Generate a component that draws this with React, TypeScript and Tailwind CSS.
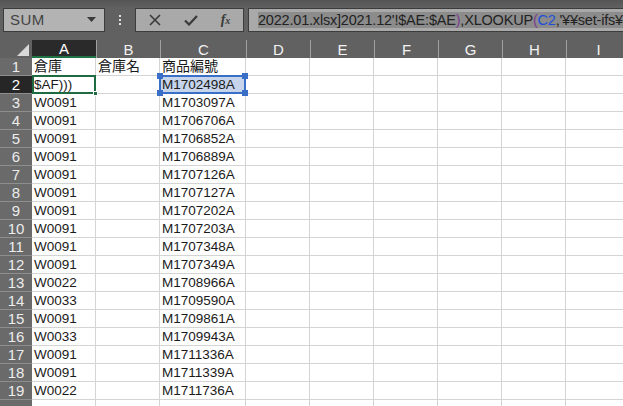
import React from "react";

const cols = [
  { k: "A", w: 64 },
  { k: "B", w: 64 },
  { k: "C", w: 86 },
  { k: "D", w: 64 },
  { k: "E", w: 64 },
  { k: "F", w: 64 },
  { k: "G", w: 64 },
  { k: "H", w: 64 },
  { k: "I", w: 64 },
];

const data: [string, string, string][] = [
  ["倉庫", "倉庫名", "商品編號"],
  ["$AF)))", "", "M1702498A"],
  ["W0091", "", "M1703097A"],
  ["W0091", "", "M1706706A"],
  ["W0091", "", "M1706852A"],
  ["W0091", "", "M1706889A"],
  ["W0091", "", "M1707126A"],
  ["W0091", "", "M1707127A"],
  ["W0091", "", "M1707202A"],
  ["W0091", "", "M1707203A"],
  ["W0091", "", "M1707348A"],
  ["W0091", "", "M1707349A"],
  ["W0022", "", "M1708966A"],
  ["W0033", "", "M1709590A"],
  ["W0091", "", "M1709861A"],
  ["W0033", "", "M1709943A"],
  ["W0091", "", "M1711336A"],
  ["W0091", "", "M1711339A"],
  ["W0022", "", "M1711736A"],
  ["", "", ""],
];

const font = "font-['Liberation_Sans','Noto_Sans_CJK_JP',sans-serif]";

function CellText({ text, row }: { text: string; row: number }) {
  const cjk = row === 1;
  return (
    <span className={`${cjk ? "text-[14px]" : "text-[13.5px]"} leading-none text-[#1a1a1a] whitespace-nowrap pl-[2px] pb-[2px]`}>
      {text}
    </span>
  );
}

export default function App() {
  return (
    <div className={`w-[623px] h-[406px] overflow-hidden bg-[#616161] ${font} flex flex-col`}>
      {/* toolbar */}
      <div className="h-[40px] shrink-0 flex items-start pt-[8px] pl-[3px] bg-gradient-to-b from-[#555555] from-[0%] via-[#616161] via-[20%] to-[#616161]">
        <div className="w-[102px] h-[24px] bg-[#b3b3b3] border border-[#3c3c3c] flex items-center justify-between pl-[6px] pr-[8px] shrink-0">
          <span className="text-[15px] text-[#444] tracking-[0.5px]">SUM</span>
          <svg width="9" height="6" viewBox="0 0 9 6"><path d="M0 0 L9 0 L4.5 5 Z" fill="#3a3a3a" /></svg>
        </div>
        <div className="w-[30px] h-[24px] flex flex-col items-center justify-center gap-[2px] shrink-0">
          <span className="w-[2px] h-[2px] bg-[#e0e0e0]" />
          <span className="w-[2px] h-[2px] bg-[#e0e0e0]" />
          <span className="w-[2px] h-[2px] bg-[#e0e0e0]" />
        </div>
        <div className="w-[109px] h-[24px] bg-[#a9a9a9] border border-[#3c3c3c] flex items-center shrink-0">
          <div className="w-[38px] flex justify-center">
            <svg width="12" height="12" viewBox="0 0 12 12"><path d="M1 1 L11 11 M11 1 L1 11" stroke="#3a3a3a" strokeWidth="1.6" /></svg>
          </div>
          <div className="w-[34px] flex justify-center">
            <svg width="14" height="11" viewBox="0 0 14 11"><path d="M1 5.5 L5 9.5 L13 1" stroke="#3a3a3a" strokeWidth="2.2" fill="none" /></svg>
          </div>
          <div className="flex-1 flex justify-center">
            <span className="font-['Liberation_Serif',serif] italic font-bold text-[14px] text-[#3a3a3a] leading-none">
              f<span className="text-[10px]">x</span>
            </span>
          </div>
        </div>
        <div className="ml-[4px] flex-1 h-[24px] bg-[#a9a9a9] border border-[#3c3c3c] border-r-0 flex items-center pl-[9px] overflow-hidden">
          <div className="h-[16px] bg-[#8c8c8c] flex items-center whitespace-nowrap text-[14.5px] text-[#222] leading-none tracking-[-0.2px]">
            <span>2022.01.xlsx]2021.12'!$AE:$AE</span>
            <span className="text-[#7a3f8f]">)</span>
            <span>,XLOOKUP</span>
            <span className="text-[#7a3f8f]">(</span>
            <span className="text-[#1f4fd8]">C2</span>
            <span>,'¥¥set-ifs¥</span>
          </div>
        </div>
      </div>

      {/* column header */}
      <div className="h-[18px] shrink-0 flex">
        <div className="w-[32px] shrink-0 relative flex items-end justify-end pr-[3px] pb-[2px]">
          <svg width="12" height="12" viewBox="0 0 12 12"><path d="M12 0 L12 12 L0 12 Z" fill="#d9d9d9" /></svg>
        </div>
        {cols.map((c) =>
          c.k === "A" ? (
            <div key={c.k} className="shrink-0 bg-[#2a2a2a] border-b-2 border-[#217346] flex items-center justify-center text-[15px] text-white leading-none" style={{ width: c.w }}>
              {c.k}
            </div>
          ) : (
            <div key={c.k} className="shrink-0 border-l border-[#a0a0a0] flex items-center justify-center text-[15px] text-[#f2f2f2] leading-none" style={{ width: c.w }}>
              {c.k}
            </div>
          )
        )}
      </div>

      {/* rows */}
      <div className="flex flex-col bg-white">
        {data.map((r, i) => {
          const row = i + 1;
          const sel = row === 2;
          return (
            <div key={row} className="h-[18px] shrink-0 flex">
              <div className={`w-[32px] shrink-0 ${sel ? "bg-[#262626] text-white" : "bg-[#6a6a6a] text-[#ececec]"} border-b border-[#8e8e8e] flex items-center justify-center text-[15px] leading-none`}>
                {row < 20 ? row : ""}
              </div>
              {cols.map((c, ci) => {
                const text = ci < 3 ? r[ci] : "";
                const isA2 = sel && ci === 0;
                const isC2 = sel && ci === 2;
                return (
                  <div
                    key={c.k}
                    className={`shrink-0 relative border-r border-b border-[#d4d4d4] flex items-end overflow-visible ${isC2 ? "bg-[#c6d4ec]" : ""}`}
                    style={{ width: c.w }}
                  >
                    {text && <CellText text={text} row={row} />}
                    {isA2 && (
                      <div className="absolute left-0 top-[-1px] right-[-1px] bottom-[-1px] border-2 border-[#1e6b41] z-10">
                        <div className="absolute right-[-4px] bottom-[-4px] w-[5px] h-[5px] bg-[#1e6b41] border border-white" />
                      </div>
                    )}
                    {isC2 && (
                      <div className="absolute left-[-1px] top-[-1px] right-[-1px] bottom-[-1px] border-2 border-[#3a6fc7] z-10">
                        <div className="absolute left-[-4px] top-[-4px] w-[6px] h-[6px] bg-[#3a6fc7]" />
                        <div className="absolute right-[-4px] top-[-4px] w-[6px] h-[6px] bg-[#3a6fc7]" />
                        <div className="absolute left-[-4px] bottom-[-4px] w-[6px] h-[6px] bg-[#3a6fc7]" />
                        <div className="absolute right-[-4px] bottom-[-4px] w-[6px] h-[6px] bg-[#3a6fc7]" />
                      </div>
                    )}
                  </div>
                );
              })}
            </div>
          );
        })}
      </div>
    </div>
  );
}
